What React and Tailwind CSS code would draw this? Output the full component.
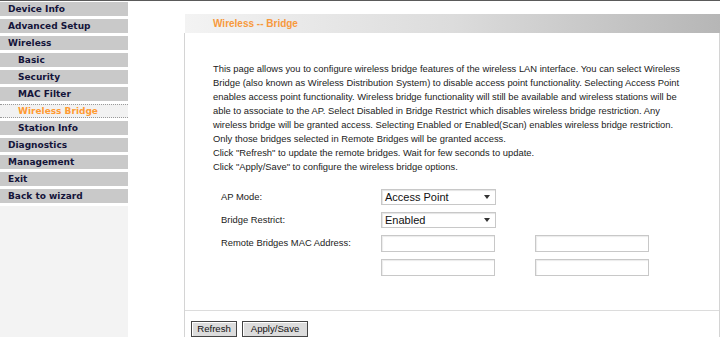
import React from "react";

const side = { fontFamily: '"DejaVu Sans", Verdana, sans-serif' };
const arial = { fontFamily: '"Liberation Sans", Arial, sans-serif' };

function Item({ label, sub, active }) {
  if (active) {
    return (
      <div
        className="h-[14px] mb-[3px] box-border border-y border-dotted border-[#9a9a9a] bg-[#f2f2f2] flex items-center pl-[18px] text-[9px] font-bold text-[#ff9a33] leading-none"
        style={side}
      >
        {label}
      </div>
    );
  }
  return (
    <div
      className={`h-[14px] mb-[3px] bg-[#c9c9c9] flex items-center ${sub ? "pl-[18px]" : "pl-[8px]"} text-[9px] font-bold text-[#14143a] leading-none`}
      style={side}
    >
      {label}
    </div>
  );
}

function Select({ value }) {
  return (
    <div className="w-[115px] h-[16px] box-border border border-[#c8c8c8] bg-white shadow-[inset_1px_1px_1px_#e4e4e4] flex items-center justify-between pl-[3px] pr-[5px]">
      <span className="text-[11px] text-[#111] leading-none" style={arial}>{value}</span>
      <svg width="6" height="4" viewBox="0 0 6 4"><polygon points="0,0 6,0 3,4" fill="#333" /></svg>
    </div>
  );
}

function Input() {
  return <div className="w-[114px] h-[17px] box-border border border-[#c8c8c8] bg-white shadow-[inset_1px_1px_1px_#ececec]" />;
}

const lines = [
  "This page allows you to configure wireless bridge features of the wireless LAN interface. You can select Wireless",
  "Bridge (also known as Wireless Distribution System) to disable access point functionality. Selecting Access Point",
  "enables access point functionality. Wireless bridge functionality will still be available and wireless stations will be",
  "able to associate to the AP. Select Disabled in Bridge Restrict which disables wireless bridge restriction. Any",
  "wireless bridge will be granted access. Selecting Enabled or Enabled(Scan) enables wireless bridge restriction.",
  "Only those bridges selected in Remote Bridges will be granted access.",
  "Click \"Refresh\" to update the remote bridges. Wait for few seconds to update.",
  "Click \"Apply/Save\" to configure the wireless bridge options.",
];

export default function App() {
  return (
    <div className="w-[720px] h-[337px] overflow-hidden bg-white border-t border-[#5a5a5a] flex">
      <div className="w-[128px] flex flex-col">
        <div className="pt-[1px] bg-white">
          <Item label="Device Info" />
          <Item label="Advanced Setup" />
          <Item label="Wireless" />
          <Item label="Basic" sub />
          <Item label="Security" sub />
          <Item label="MAC Filter" sub />
          <Item label="Wireless Bridge" active />
          <Item label="Station Info" sub />
          <Item label="Diagnostics" />
          <Item label="Management" />
          <Item label="Exit" />
          <Item label="Back to wizard" />
        </div>
        <div className="flex-1 bg-[#f3f3f3]" />
      </div>
      <div className="w-[56px]" />
      <div className="flex-1 flex flex-col pt-[13px]">
        <div className="h-[19px] ml-[1px] bg-gradient-to-r from-[#f3f3f3] via-[#dcdcdc] to-[#b6b6b6] flex items-center pl-[28px]">
          <span className="text-[10px] font-bold text-[#f7993c] leading-none" style={arial}>Wireless -- Bridge</span>
        </div>
        <div className="flex-1 border-x border-[#d4d4d4] flex flex-col">
          <div className="pt-[29px] pl-[28px] text-[9.4px] leading-[14px] text-[#222] whitespace-nowrap" style={arial}>
            {lines.map((l, i) => (
              <div key={i}>{l}</div>
            ))}
          </div>
          <div className="mt-[15px] pl-[36px] grid grid-cols-[160px_154px_114px] gap-y-[7px] items-center text-[9.4px] text-[#222]" style={arial}>
            <div>AP Mode:</div>
            <Select value="Access Point" />
            <div />
            <div>Bridge Restrict:</div>
            <Select value="Enabled" />
            <div />
            <div>Remote Bridges MAC Address:</div>
            <Input />
            <Input />
            <div />
            <Input />
            <Input />
          </div>
          <div className="mt-[34px] border-t border-[#dcdcdc] pt-[10px] pl-[6px] flex gap-[5px]">
            <button className="w-[46px] h-[16px] box-border border border-[#444] bg-[#dcdcdc] shadow-[inset_1px_1px_0_#fff] text-[9.6px] text-[#111] leading-none" style={arial}>Refresh</button>
            <button className="w-[66px] h-[16px] box-border border border-[#444] bg-[#dcdcdc] shadow-[inset_1px_1px_0_#fff] text-[9.6px] text-[#111] leading-none" style={arial}>Apply/Save</button>
          </div>
        </div>
      </div>
    </div>
  );
}
